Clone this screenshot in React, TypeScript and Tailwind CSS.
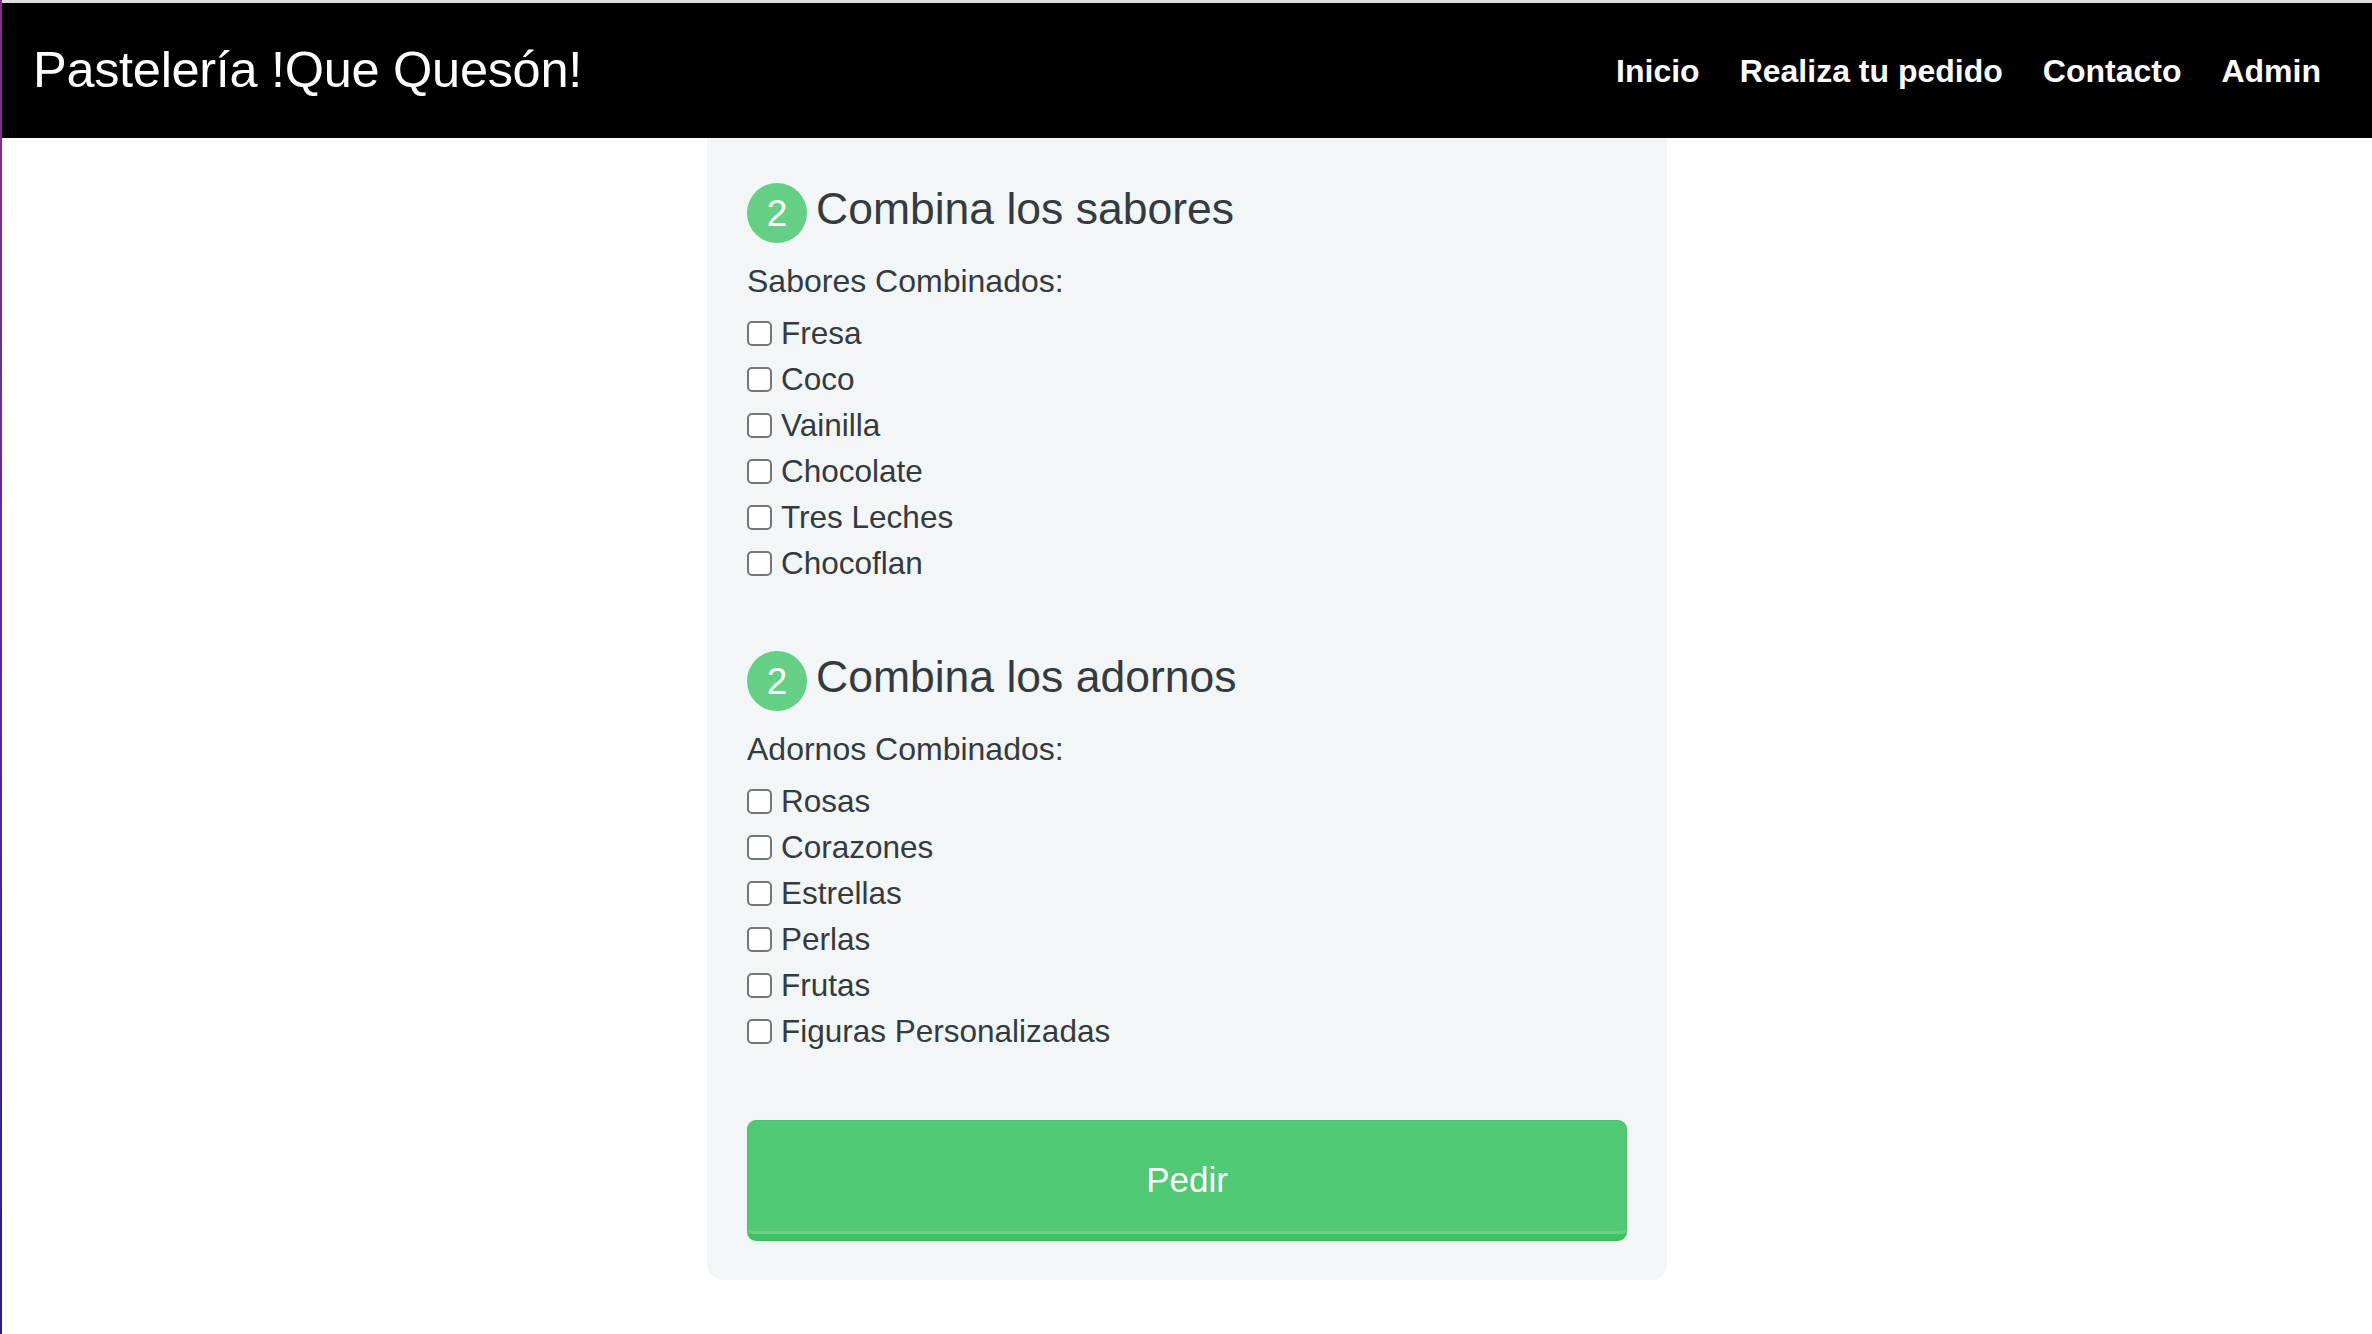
import React from "react";

const sabores = ["Fresa", "Coco", "Vainilla", "Chocolate", "Tres Leches", "Chocoflan"];
const adornos = ["Rosas", "Corazones", "Estrellas", "Perlas", "Frutas", "Figuras Personalizadas"];

interface SectionProps {
  title: string;
  label: string;
  options: string[];
}

const StepTitle = ({ title }: { title: string }) => (
  <div className="flex items-center gap-[9px] h-[60px]">
    <span className="w-[60px] h-[60px] rounded-full bg-[#64cf85] text-white text-[37px] leading-none flex items-center justify-center">
      2
    </span>
    <h2 className="text-[44.5px] leading-none text-[#343a40] -mt-[8px]">{title}</h2>
  </div>
);

const CheckGroup = ({ title, label, options }: SectionProps) => (
  <div>
    <StepTitle title={title} />
    <p className="mt-[15px] mb-[7px] text-[32px] leading-[46px] text-[#343a40]">{label}</p>
    <div className="flex flex-col">
      {options.map((opt) => (
        <label key={opt} className="flex items-center gap-[9px] h-[46px] text-[31.5px] text-[#343a40]">
          <input
            type="checkbox"
            className="appearance-none w-[25px] h-[25px] bg-white border-2 border-[#767676] rounded-[5px] -mt-[2px]"
          />
          {opt}
        </label>
      ))}
    </div>
  </div>
);

const Navbar = () => (
  <header className="h-[135px] bg-black flex items-center justify-between pl-[31px] pr-[51px]">
    <a className="text-white text-[50.5px] leading-none tracking-[-0.3px]">Pastelería !Que Quesón!</a>
    <nav className="flex items-center gap-[40px] text-white text-[32px] font-bold">
      <a>Inicio</a>
      <a>Realiza tu pedido</a>
      <a>Contacto</a>
      <a>Admin</a>
    </nav>
  </header>
);

export default function App() {
  return (
    <div className="min-h-screen flex bg-white font-['Liberation_Sans',Arial,sans-serif]">
      <div className="w-[2px] shrink-0 bg-gradient-to-b from-[#8c2c90] to-[#2a1a8c]" />
      <div className="flex-1 flex flex-col">
        <div className="h-[3px] bg-[#dedede]" />
        <Navbar />
        <main className="flex justify-center">
          <div className="w-[960px] bg-[#f2f6f7] rounded-b-[16px] px-[40px] pt-[45px] pb-[39px]">
            <CheckGroup title="Combina los sabores" label="Sabores Combinados:" options={sabores} />
            <div className="mt-[64px]">
              <CheckGroup title="Combina los adornos" label="Adornos Combinados:" options={adornos} />
            </div>
            <button className="mt-[65px] w-full h-[121px] rounded-[9px] bg-[#52c975] border border-[#47c26a] border-b-[7px] border-b-[#42bf63] shadow-[inset_0_-3px_0_#61d284] text-white text-[35px] pt-[6px] flex items-center justify-center">
              Pedir
            </button>
          </div>
        </main>
      </div>
    </div>
  );
}
